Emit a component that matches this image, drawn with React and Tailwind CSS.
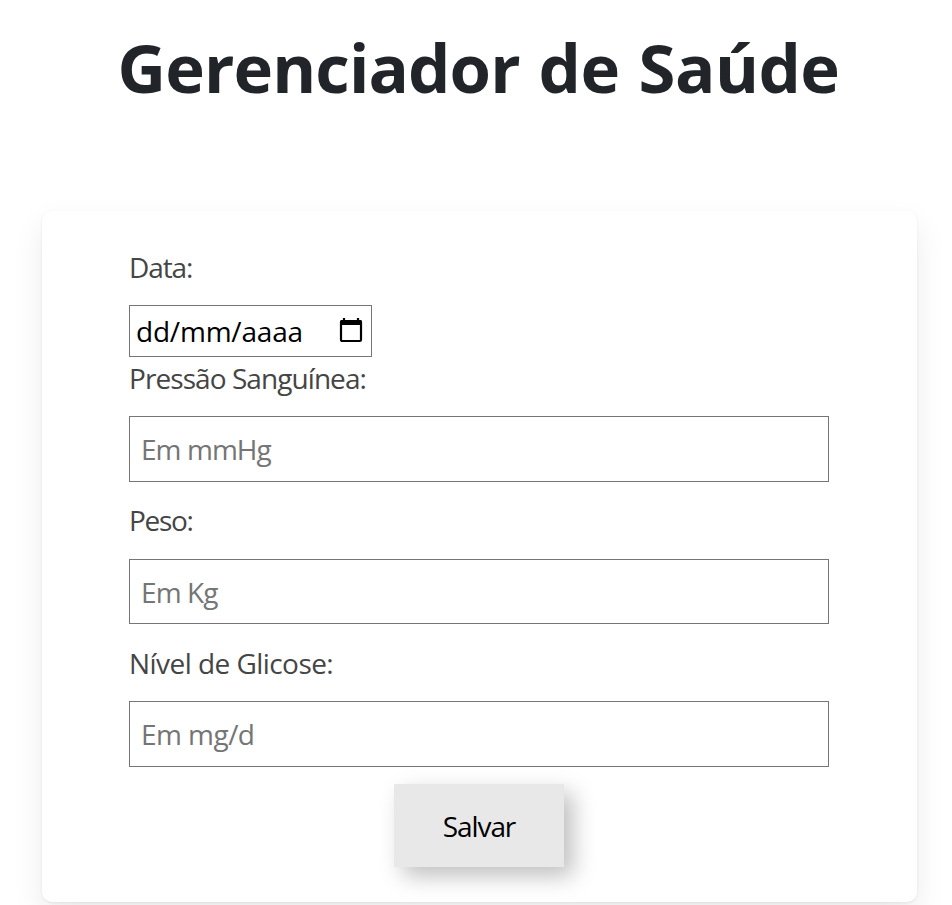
import React from "react";

function Label({ children, className }) {
  return (
    <div className="flex h-[42px] items-center whitespace-nowrap leading-[42px] text-[#454545]">
      <span className={className}>{children}</span>
    </div>
  );
}

function CalendarIcon() {
  return (
    <svg className="mb-[2px]" width="24" height="26" viewBox="0 0 24 26" fill="none">
      <path d="M5 1v4M19 1v4" stroke="#000" strokeWidth="2.2" />
      <path d="M1 7V5a2 2 0 0 1 2-2h18a2 2 0 0 1 2 2v3H1z" fill="#000" />
      <rect x="2" y="4" width="20" height="20" rx="1.2" stroke="#000" strokeWidth="2.2" />
    </svg>
  );
}

const inputClass =
  "block w-full rounded-none border border-[#767676] bg-white pl-[11px] text-[28px] outline-none placeholder:text-[#757575]";

export default function App() {
  return (
    <div className="h-[905px] overflow-hidden bg-white pr-[35px] pl-[42px] font-['Open_Sans',sans-serif] text-[28px]">
      <h1 className="h-[211px] pt-[21px] pr-[2px] text-center text-[67px] leading-[92px] font-bold tracking-[-0.5px] [word-spacing:2px] whitespace-nowrap text-[#212529]">
        <span className="tracking-[-0.88px]">Gerenciador</span> de Saúde
      </h1>
      <form className="flex h-[691px] flex-col rounded-[10px] bg-white pt-[35px] pr-[88px] pl-[87px] shadow-[0_14px_32px_rgba(0,0,0,0.08),0_1px_3px_rgba(0,0,0,0.07)]">
        <Label className="tracking-[-1.1px]">Data:</Label>
        <div className="mt-[17px] flex h-[52px] w-[243px] items-center justify-between border border-[#767676] pr-[8px] pl-[6px] text-black">
          <span className="tracking-[-0.2px]">dd/mm/aaaa</span>
          <CalendarIcon />
        </div>
        <Label className="tracking-[-0.93px]">Pressão Sanguínea:</Label>
        <input className={`${inputClass} mt-[17px] h-[66px] tracking-[-0.95px]`} placeholder="Em mmHg" />
        <div className="h-[17px]" />
        <Label className="tracking-[-1.3px]">Peso:</Label>
        <input className={`${inputClass} mt-[18px] h-[65px] tracking-[-0.9px]`} placeholder="Em Kg" />
        <div className="h-[18px]" />
        <Label className="tracking-[-0.55px]">Nível de Glicose:</Label>
        <input className={`${inputClass} mt-[17px] h-[66px] tracking-[-0.55px]`} placeholder="Em mg/d" />
        <button
          type="button"
          className="mt-[17px] h-[83px] w-[170px] self-center bg-[#e8e8e8] tracking-[-1.1px] text-black shadow-[9px_9px_21px_rgba(0,0,0,0.25)]"
        >
          Salvar
        </button>
      </form>
    </div>
  );
}
